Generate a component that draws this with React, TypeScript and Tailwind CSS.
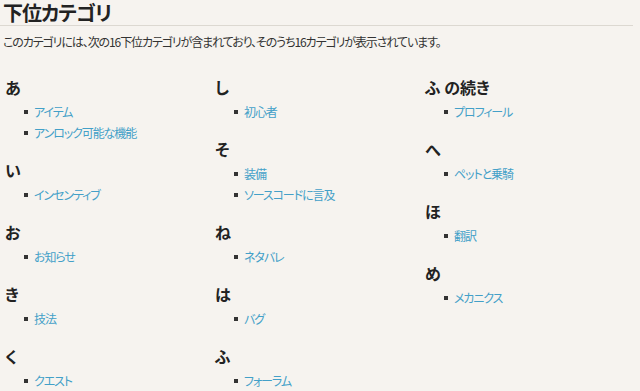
import React from "react";

type Section = { title: string; items: string[] };

const columns: Section[][] = [
  [
    { title: "あ", items: ["アイテム", "アンロック可能な機能"] },
    { title: "い", items: ["インセンティブ"] },
    { title: "お", items: ["お知らせ"] },
    { title: "き", items: ["技法"] },
    { title: "く", items: ["クエスト"] },
  ],
  [
    { title: "し", items: ["初心者"] },
    { title: "そ", items: ["装備", "ソースコードに言及"] },
    { title: "ね", items: ["ネタバレ"] },
    { title: "は", items: ["バグ"] },
    { title: "ふ", items: ["フォーラム"] },
  ],
  [
    { title: "ふ の続き", items: ["プロフィール"] },
    { title: "へ", items: ["ペットと乗騎"] },
    { title: "ほ", items: ["翻訳"] },
    { title: "め", items: ["メカニクス"] },
  ],
];

export default function App() {
  return (
    <div
      className="w-[640px] h-[391px] overflow-hidden bg-[#f6f3ef] text-[#333] [font-feature-settings:'palt']"
      style={{ fontFamily: '"Noto Sans CJK JP", "Noto Sans", sans-serif' }}
    >
      <h1 className="pl-[3px] pt-px text-[20px] leading-[24px] font-bold text-[#222] tracking-[-1px]">
        下位カテゴリ
      </h1>
      <div className="w-[633px] h-px bg-[#dcd8d1]" />
      <p className="mt-[7px] pl-[3px] text-[12px] leading-[18px] text-[#333] tracking-[-1.1px]">
        このカテゴリには、次の16下位カテゴリが含まれており、そのうち16カテゴリが表示されています。
      </p>
      <div className="mt-[26px] pl-[5px] flex">
        {columns.map((col, ci) => (
          <div key={ci} className="w-[210px] flex flex-col gap-[17px]">
            {col.map((sec) => (
              <div key={sec.title}>
                <h3 className="h-[20px] text-[16px] leading-[20px] font-semibold text-[#222]">
                  {sec.title}
                </h3>
                <ul className="mt-[4px]">
                  {sec.items.map((it) => (
                    <li key={it} className="h-[21px] flex items-center pl-[19px]">
                      <span className="w-[4px] h-[4px] bg-[#333] mr-[6px]" />
                      <span className="text-[12px] leading-[21px] text-[#43a0c8] tracking-[-1.1px]">
                        {it}
                      </span>
                    </li>
                  ))}
                </ul>
              </div>
            ))}
          </div>
        ))}
      </div>
    </div>
  );
}
